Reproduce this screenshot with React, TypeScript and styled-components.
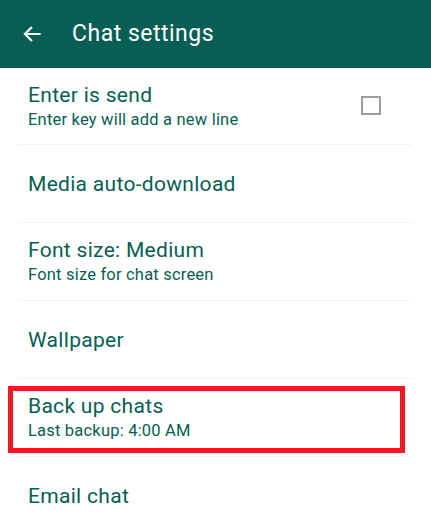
import styled, { createGlobalStyle } from "styled-components";

const GlobalStyle = createGlobalStyle`
  html, body {
    margin: 0;
    padding: 0;
    background: #ffffff;
  }
  body {
    font-family: Roboto, "Noto Sans", Arial, sans-serif;
    -webkit-font-smoothing: antialiased;
  }
`;

const Screen = styled.div`
  width: 431px;
  height: 530px;
  overflow: hidden;
  background: #fff;
`;

const Toolbar = styled.header`
  display: flex;
  align-items: center;
  height: 68px;
  background: #075e54;
  color: #fff;
  padding: 0 0 1px 22px;
  box-sizing: border-box;
`;

const BackButton = styled.button`
  display: flex;
  align-items: center;
  justify-content: center;
  width: 20px;
  height: 20px;
  padding: 0;
  border: none;
  background: transparent;
  color: #fff;
  cursor: pointer;
`;

const Title = styled.h1`
  margin: 0 0 0 30px;
  font-size: 23px;
  font-weight: 400;
  letter-spacing: 0.5px;
`;

const List = styled.ul`
  list-style: none;
  margin: 0;
  padding: 0 19px 0 18px;
`;

const Row = styled.li<{ highlighted?: boolean }>`
  position: relative;
  display: flex;
  align-items: center;
  height: 78px;
  padding: 0 31px 0 10px;
  border-bottom: 1px solid #f3f3f3;
  box-sizing: border-box;

  &:first-child {
    height: 77px;
  }

  ${(p) =>
    p.highlighted &&
    `
    &::after {
      content: "";
      position: absolute;
      left: -10px;
      right: 7px;
      top: 7px;
      bottom: 3px;
      border: 5px solid #ed1c24;
    }
  `}
`;

const Texts = styled.div`
  flex: 1;
  display: flex;
  flex-direction: column;
  color: #075e54;
`;

const Label = styled.span`
  font-size: 21px;
  line-height: 26px;
  letter-spacing: 0.3px;
`;

const Summary = styled.span`
  font-size: 16.5px;
  line-height: 22px;
  margin-top: 1px;
  letter-spacing: 0.2px;
`;

const Checkbox = styled.span`
  width: 20px;
  height: 19px;
  border: 2px solid #9e9e9e;
  box-sizing: border-box;
  margin-top: -2px;
`;

const settings = [
  { label: "Enter is send", summary: "Enter key will add a new line", checkbox: true },
  { label: "Media auto-download" },
  { label: "Font size: Medium", summary: "Font size for chat screen" },
  { label: "Wallpaper" },
  { label: "Back up chats", summary: "Last backup: 4:00 AM", highlighted: true },
  { label: "Email chat" },
];

export default function App() {
  return (
    <Screen>
      <GlobalStyle />
      <Toolbar>
        <BackButton aria-label="Back">
          <svg width="20" height="20" viewBox="0 0 24 24" fill="none">
            <path
              d="M21 12H4M11 4.5L3.5 12l7.5 7.5"
              stroke="#fff"
              strokeWidth="2.6"
              strokeLinecap="square"
            />
          </svg>
        </BackButton>
        <Title>Chat settings</Title>
      </Toolbar>
      <List>
        {settings.map((s) => (
          <Row key={s.label} highlighted={s.highlighted}>
            <Texts>
              <Label>{s.label}</Label>
              {s.summary && <Summary>{s.summary}</Summary>}
            </Texts>
            {s.checkbox && <Checkbox />}
          </Row>
        ))}
      </List>
    </Screen>
  );
}
